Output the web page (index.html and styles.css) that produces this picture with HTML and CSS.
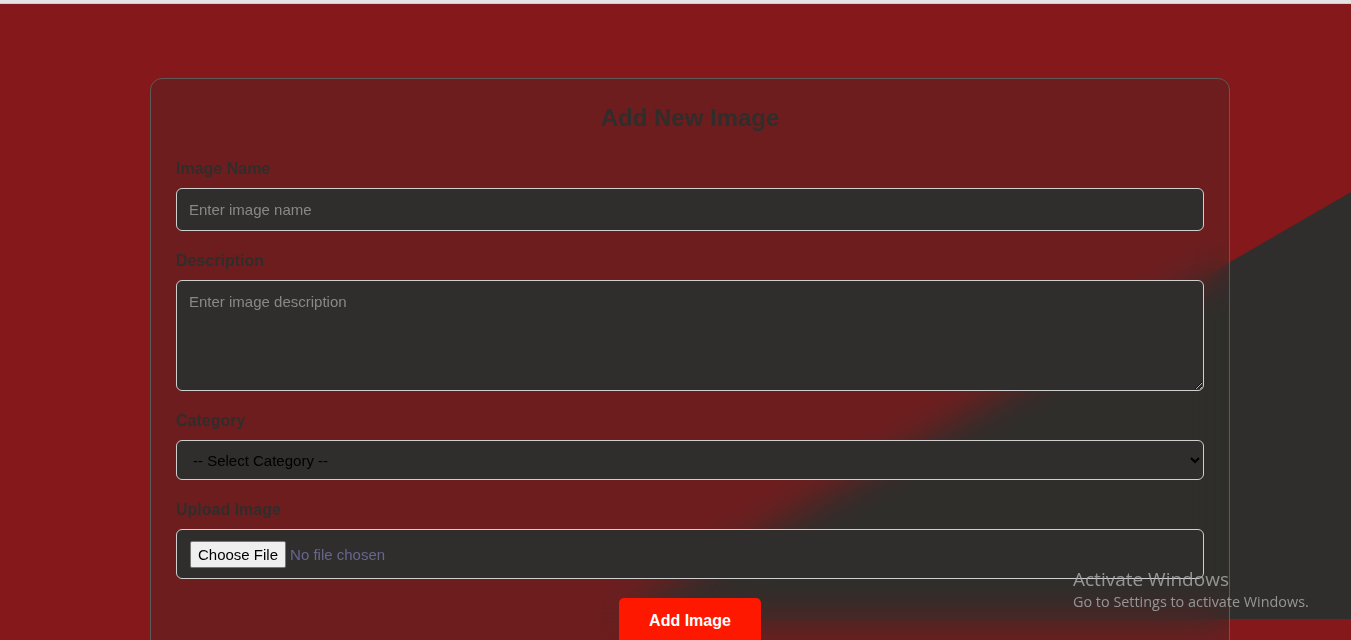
FILE: index.html
```html
<!DOCTYPE html>
<html lang="en">
<head>
<meta charset="UTF-8">
<title>Add New Image</title>
<link rel="stylesheet" href="styles.css">
</head>
<body>
<div class="topbar"></div>
<div class="bg-shape"></div>
<main class="page">
  <form class="card">
    <h2 class="title">Add New Image</h2>
    <div class="group">
      <label class="label" for="name">Image Name</label>
      <input class="field field-input" id="name" type="text" placeholder="Enter image name">
    </div>
    <div class="group">
      <label class="label" for="desc">Description</label>
      <textarea class="field field-area" id="desc" placeholder="Enter image description"></textarea>
    </div>
    <div class="group">
      <label class="label" for="cat">Category</label>
      <select class="field field-select" id="cat">
        <option>-- Select Category --</option>
      </select>
    </div>
    <div class="group">
      <label class="label" for="file">Upload Image</label>
      <input class="field field-file" id="file" type="file">
    </div>
    <div class="actions">
      <button class="submit" type="button">Add Image</button>
    </div>
  </form>
</main>
<div class="watermark">
  <div class="wm-title">Activate Windows</div>
  <div class="wm-sub">Go to Settings to activate Windows.</div>
</div>
</body>
</html>
```

FILE: styles.css
```css
* { box-sizing: border-box; }

html, body {
  margin: 0;
  padding: 0;
}

body {
  background: #84181a;
  font-family: "Liberation Sans", Arial, sans-serif;
  min-height: 100vh;
  overflow: hidden;
}

.topbar {
  height: 4px;
  background: #e4e4e4;
  border-bottom: 1px solid #cfcfcf;
  position: relative;
  z-index: 3;
}

.bg-shape {
  position: fixed;
  inset: 0;
  background: #302e2c;
  clip-path: polygon(100% 30%, 100% 96.7%, 45.4% 96.7%);
  z-index: 0;
}

.page {
  position: relative;
  z-index: 1;
  padding: 74px 0 0 150px;
}

.card {
  width: 1080px;
  background: rgba(48, 46, 44, 0.26);
  backdrop-filter: blur(18px);
  -webkit-backdrop-filter: blur(18px);
  border: 1px solid #5f5a58;
  border-radius: 12px;
  padding: 25px 25px 30px;
}

.title {
  margin: 0 0 27px;
  text-align: center;
  font-size: 24px;
  font-weight: bold;
  color: #302e2c;
}

.group {
  margin-bottom: 20px;
}

.label {
  display: block;
  font-size: 16px;
  line-height: 20px;
  font-weight: bold;
  color: #302e2c;
  margin-bottom: 9px;
}

.field {
  display: block;
  width: 100%;
  background: #302e2c;
  border: 1px solid #cfcfcf;
  border-radius: 6px;
  font-family: "Liberation Sans", Arial, sans-serif;
  font-size: 15px;
  color: #e0e0e0;
  padding: 0 12px;
  margin: 0;
  outline: none;
}

.field::placeholder {
  color: #8a8886;
}

.field-input {
  height: 43px;
}

.field-area {
  height: 111px;
  padding: 12px;
  resize: vertical;
}

.field-select {
  height: 40px;
  color: #000;
  padding: 0 8px 0 12px;
}

.field-file {
  height: 50px;
  padding: 11px 12px;
  color: #66668f;
}

.field-file::file-selector-button {
  font-family: "Liberation Sans", Arial, sans-serif;
  font-size: 15px;
  color: #000;
  background: #efefef;
  border: 1px solid #767676;
  border-radius: 2px;
  padding: 4px 7px;
  margin: 0 4px 0 1px;
}

.actions {
  display: flex;
  justify-content: center;
  margin-top: -1px;
}

.submit {
  background: #ff1800;
  color: #fff;
  border: none;
  border-radius: 5px;
  font-family: "Liberation Sans", Arial, sans-serif;
  font-size: 16px;
  font-weight: bold;
  padding: 14px 30px;
  width: 142px;
  cursor: pointer;
}

.watermark {
  position: fixed;
  left: 1073px;
  top: 566px;
  z-index: 5;
  color: rgba(175, 175, 175, 0.8);
  font-family: "Open Sans", "Noto Sans", sans-serif;
  pointer-events: none;
}

.wm-title {
  font-size: 19px;
  line-height: 26px;
}

.wm-sub {
  font-size: 14.4px;
  line-height: 20px;
}
```
